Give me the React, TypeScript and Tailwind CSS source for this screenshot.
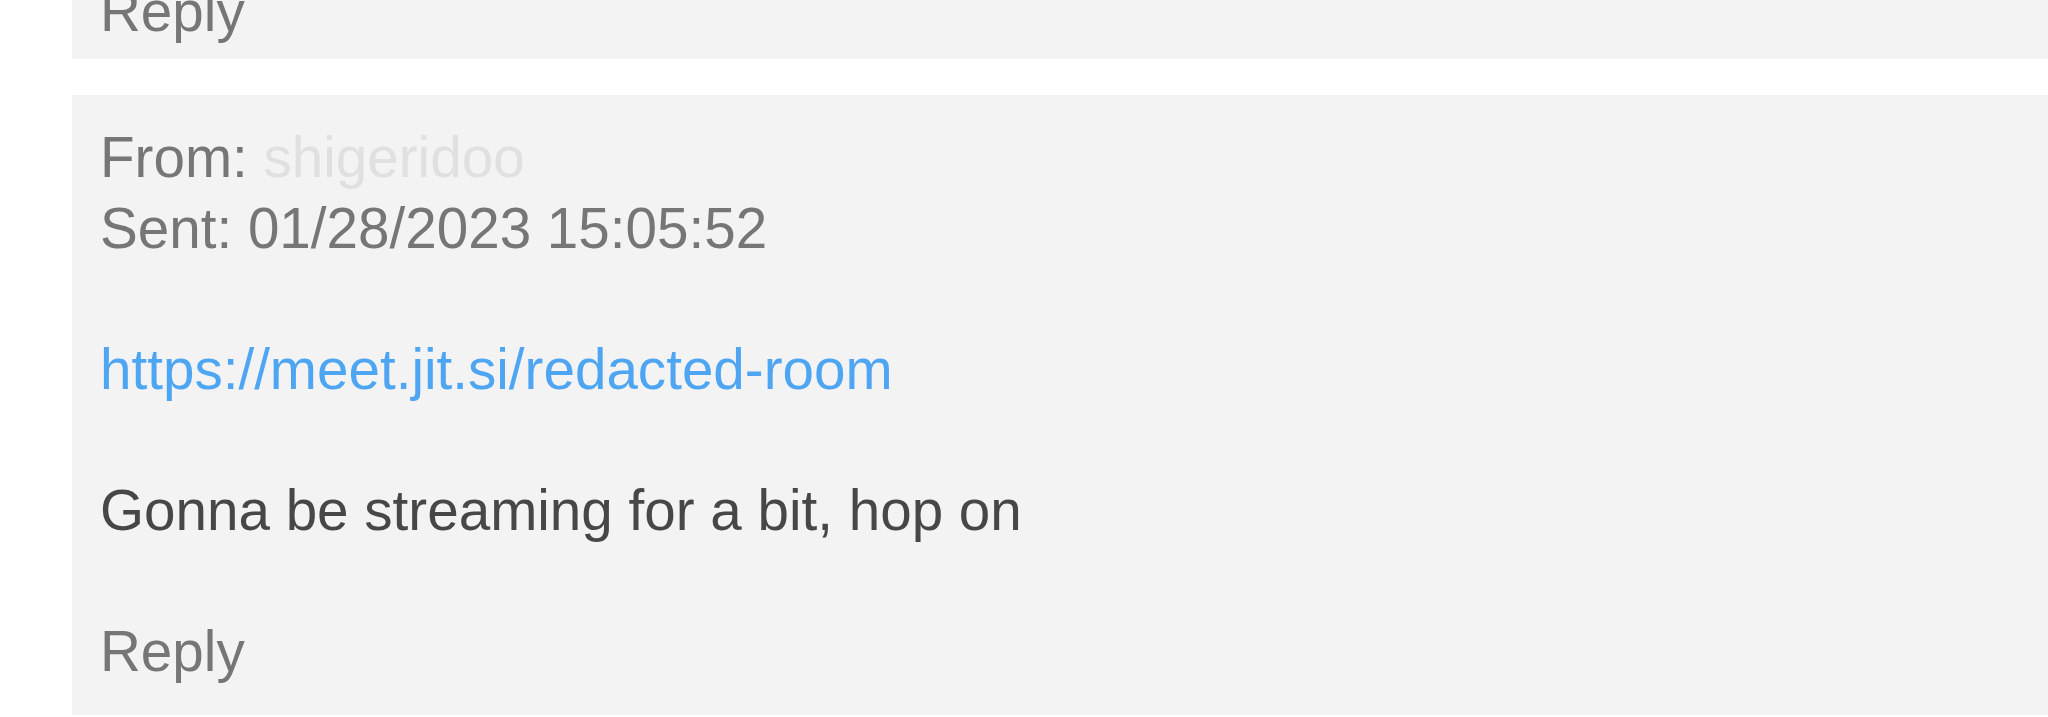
const Message = ({
  from,
  sent,
  link,
  body,
}: {
  from: string;
  sent: string;
  link: string;
  body: string;
}) => (
  <div className="bg-[#f3f3f3] p-[28px]">
    <div className="text-[#767676]">
      From: <span className="text-[#e0e0e0]">{from}</span>
    </div>
    <div className="text-[#767676]">Sent: {sent}</div>
    <br />
    <a href="#" className="text-[#4ea6f3]">
      {link}
    </a>
    <br />
    <br />
    <div className="text-[#474747]">{body}</div>
    <br />
    <div className="text-[#767676]">Reply</div>
  </div>
);

export default function App() {
  return (
    <main
      className="min-h-screen bg-white pl-[72px] text-[56.6px] leading-[70.5px] overflow-hidden"
      style={{ fontFamily: '"Liberation Sans", Arial, sans-serif' }}
    >
      <div className="-mt-[28px] flex flex-col gap-[36px]">
        <div className="bg-[#f3f3f3] px-[28px] pb-[28px] h-[87px] flex items-end">
          <div className="text-[#767676] -mb-[16px]">Reply</div>
        </div>
        <Message
          from="shigeridoo"
          sent="01/28/2023 15:05:52"
          link="https://meet.jit.si/redacted-room"
          body="Gonna be streaming for a bit, hop on"
        />
      </div>
    </main>
  );
}
